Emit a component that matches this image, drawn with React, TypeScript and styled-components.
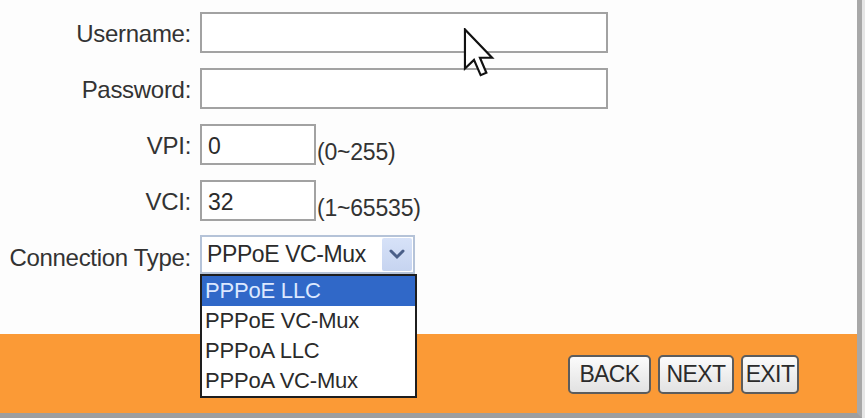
import React from 'react';
import styled, { createGlobalStyle } from 'styled-components';

const GlobalStyle = createGlobalStyle`
  html, body {
    margin: 0;
    padding: 0;
    background: #e9e9e9;
  }
  body {
    font-family: 'Liberation Sans', Arial, sans-serif;
    color: #2b2b2b;
  }
`;

const connectionTypes = ['PPPoE LLC', 'PPPoE VC-Mux', 'PPPoA LLC', 'PPPoA VC-Mux'];

function Cursor() {
  return (
    <CursorWrapper>
      <svg width="32" height="50" viewBox="0 0 13 21">
        <path
          d="M0.6 0.6 L0.6 17 L4.4 13.4 L7.2 19.8 L9.6 18.8 L6.9 12.5 L12 12.5 Z"
          fill="#ffffff"
          stroke="#111111"
          strokeWidth="0.9"
          strokeLinejoin="miter"
        />
      </svg>
    </CursorWrapper>
  );
}

function ChevronDown() {
  return (
    <svg width="16" height="12" viewBox="0 0 16 12">
      <path d="M2 3 L8 9 L14 3" fill="none" stroke="#4a5f88" strokeWidth="3" strokeLinecap="round" />
    </svg>
  );
}

function App() {
  return (
    <>
      <GlobalStyle />
      <Frame>
        <Panel>
          <Form>
            <Label>Username:</Label>
            <Field>
              <TextBox width={408} />
            </Field>

            <Label>Password:</Label>
            <Field>
              <TextBox width={408} />
            </Field>

            <Label>VPI:</Label>
            <Field>
              <TextBox width={116}>0</TextBox>
              <Hint>(0~255)</Hint>
            </Field>

            <Label>VCI:</Label>
            <Field>
              <TextBox width={116}>32</TextBox>
              <Hint>(1~65535)</Hint>
            </Field>

            <Label>Connection Type:</Label>
            <Field>
              <Select>
                <SelectValue>PPPoE VC-Mux</SelectValue>
                <ArrowButton>
                  <ChevronDown />
                </ArrowButton>
                <OptionList>
                  {connectionTypes.map((item, index) => (
                    <Option key={item} selected={index === 0}>
                      {item}
                    </Option>
                  ))}
                </OptionList>
              </Select>
            </Field>
          </Form>
          <Footer>
            <Button width={83}>BACK</Button>
            <Button width={76}>NEXT</Button>
            <Button width={58}>EXIT</Button>
          </Footer>
          <Cursor />
        </Panel>
      </Frame>
    </>
  );
}

const Frame = styled.div`
  width: 865px;
  height: 418px;
  background: #e6e6e6;
  overflow: hidden;
`;

const Panel = styled.div`
  position: relative;
  width: 857px;
  height: 413px;
  display: flex;
  flex-direction: column;
  background: #fdfdfd;
  border-right: 5px solid #a8a8a8;
  border-bottom: 5px solid #9e9e9e;
`;

const Form = styled.div`
  height: 334px;
  box-sizing: border-box;
  padding-top: 11px;
  display: grid;
  grid-template-columns: 200px 1fr;
  grid-auto-rows: 42px;
  row-gap: 14px;
  align-items: center;
`;

const Label = styled.div`
  font-size: 24px;
  text-align: right;
  padding-right: 9px;
  padding-top: 4px;
  letter-spacing: -0.3px;
  white-space: nowrap;
  color: #333333;
`;

const Field = styled.div`
  display: flex;
  align-items: center;
  height: 100%;
`;

const TextBox = styled.div<{ width: number }>`
  width: ${({ width }) => width}px;
  height: 41px;
  box-sizing: border-box;
  border: 2px solid #a2a2a2;
  background: #ffffff;
  font-size: 23px;
  padding: 7px 0 0 6px;
  color: #2b2b2b;
`;

const Hint = styled.span`
  font-size: 23px;
  margin-left: 1px;
  padding-top: 16px;
  letter-spacing: -0.2px;
  color: #333333;
`;

const Select = styled.div`
  position: relative;
  width: 215px;
  height: 39px;
  margin-top: -4px;
  box-sizing: border-box;
  border: 2px solid #b5c3d8;
  background: #ffffff;
  display: flex;
  align-items: center;
`;

const SelectValue = styled.span`
  flex: 1;
  font-size: 23px;
  padding-left: 5px;
  letter-spacing: -0.4px;
`;

const ArrowButton = styled.div`
  width: 30px;
  height: 33px;
  margin-right: 1px;
  border-radius: 2px;
  background: linear-gradient(#d7e2f8, #c6d4f0);
  display: flex;
  align-items: center;
  justify-content: center;
`;

const OptionList = styled.div`
  position: absolute;
  top: calc(100% + 2px);
  left: -2px;
  width: 217px;
  box-sizing: border-box;
  border: 2px solid #1e1e1e;
  background: #ffffff;
  z-index: 2;
`;

const Option = styled.div<{ selected: boolean }>`
  height: 30px;
  line-height: 30px;
  font-size: 22px;
  padding-left: 3px;
  letter-spacing: -0.2px;
  background: ${({ selected }) => (selected ? '#3068c8' : '#ffffff')};
  color: ${({ selected }) => (selected ? '#dce8ff' : '#2b2b2b')};
`;

const Footer = styled.div`
  flex: 1;
  background: #fb9a36;
  display: flex;
  justify-content: flex-end;
  align-items: center;
  gap: 7px;
  padding-right: 58px;
  padding-top: 2px;
`;

const Button = styled.div<{ width: number }>`
  width: ${({ width }) => width}px;
  height: 39px;
  box-sizing: border-box;
  border: 2px solid #5c5c5c;
  border-radius: 5px;
  background: linear-gradient(#fbfbfb, #e2e2e2);
  font-size: 23px;
  letter-spacing: -0.6px;
  color: #2b2b2b;
  display: flex;
  align-items: center;
  justify-content: center;
`;

const CursorWrapper = styled.div`
  position: absolute;
  left: 463px;
  top: 28px;
  line-height: 0;
  pointer-events: none;
`;

export default App;
